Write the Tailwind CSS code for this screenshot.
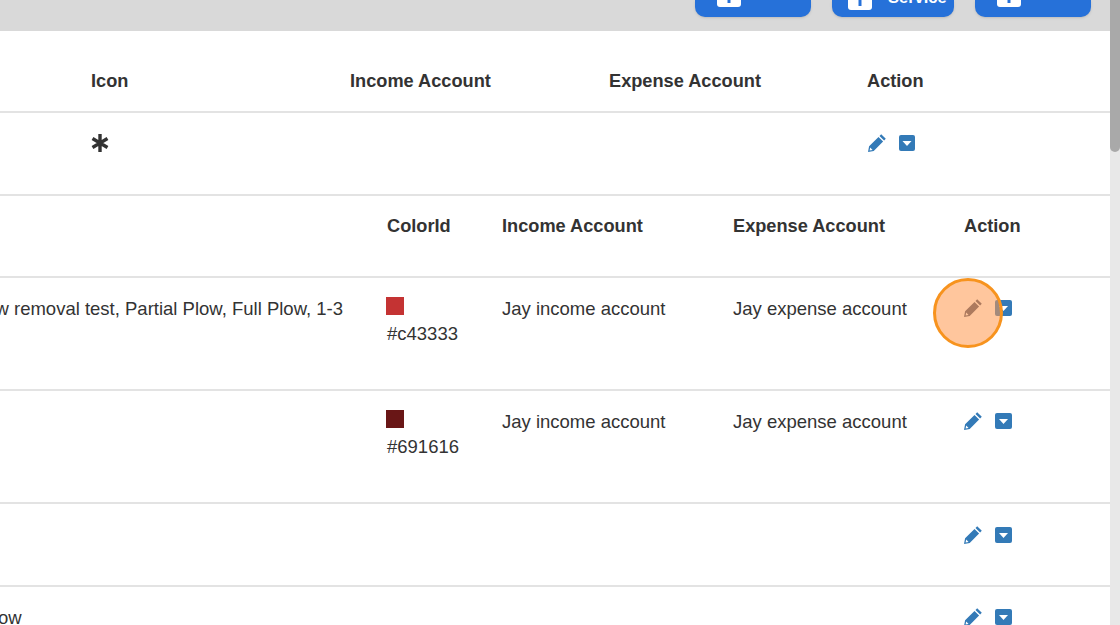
<!DOCTYPE html>
<html lang="en">
<head>
    <meta charset="UTF-8">
    <title>Items</title>
    <script src="https://cdn.jsdelivr.net/npm/@tailwindcss/browser@4"></script>
</head>
<body class="h-[625px] overflow-hidden bg-white font-['Liberation_Sans',Arial,sans-serif] text-[18.5px] leading-[24px] text-[#333]">
<div class="flex h-[625px]">
    <div class="w-[1110px] shrink-0">
        <!-- Top toolbar -->
        <div class="flex h-[31px] items-start justify-end gap-[21px] overflow-hidden bg-[#d9d9d9] pr-[19px]">
            <button class="relative flex h-[17px] w-[116px] items-start overflow-hidden rounded-b-[10px] bg-[#2671d9] pl-[22px] shadow-sm">
                <svg class="w-6 h-[7px]" viewBox="0 0 24 7"><path d="M0 0h24v4a3 3 0 0 1-3 3H3a3 3 0 0 1-3-3z" fill="#fff"/><path d="M10.500 0h3v3h-3z" fill="#2671d9"/></svg>
                <span class="absolute left-[62px] top-[-18px] text-[16.5px] font-bold text-white/70">Item</span>
            </button>
            <button class="relative flex h-[17px] w-[122px] items-start overflow-hidden rounded-b-[10px] bg-[#2671d9] pl-[16px] shadow-sm">
                <svg class="w-6 h-[10px]" viewBox="0 0 24 10"><path d="M0 0h24v7a3 3 0 0 1-3 3H3a3 3 0 0 1-3-3z" fill="#fff"/><path d="M10.500 0h3v6h-3z" fill="#2671d9"/></svg>
                <span class="absolute left-[56px] top-[-15px] text-[16.5px] font-bold text-white">Service</span>
            </button>
            <button class="relative flex h-[17px] w-[116px] items-start overflow-hidden rounded-b-[10px] bg-[#2671d9] pl-[22px] shadow-sm">
                <svg class="w-6 h-[7px]" viewBox="0 0 24 7"><path d="M0 0h24v4a3 3 0 0 1-3 3H3a3 3 0 0 1-3-3z" fill="#fff"/><path d="M10.500 0h3v3h-3z" fill="#2671d9"/></svg>
                <span class="absolute left-[62px] top-[-18px] text-[16.5px] font-bold text-white/70">Part</span>
            </button>
        </div>

        <!-- First table -->
        <div class="grid grid-cols-[91px_259px_259px_258px_1fr] font-bold text-[18.2px] h-[82px] pt-[38px] border-b-2 border-[#e3e3e3]">
            <div></div>
            <div>Icon</div>
            <div>Income Account</div>
            <div>Expense Account</div>
            <div>Action</div>
        </div>
        <div class="grid grid-cols-[91px_259px_259px_258px_1fr] h-[83px] pt-[20px] border-b-2 border-[#e3e3e3]">
            <div></div>
            <div>
                <svg class="w-[18px] h-[20px]" viewBox="0 0 18 20"><path d="M9 1v18M1.500 5.500l15 9M1.500 14.500l15-9" stroke="#333" stroke-width="3.400" fill="none"/></svg>
            </div>
            <div></div>
            <div></div>
            <div class="flex items-start gap-[12px]">
                <svg class="w-5 h-5" viewBox="0 0 20 20"><path d="M14.200 1.200 18.800 5.800l-1.700 1.700-4.600-4.600zM11.500 3.900l4.600 4.600-9.400 9.400-5.700 1.100 1.100-5.700zM3.200 14.600l-.6 3 3-.6z" fill="#337ab7" fill-rule="evenodd"/></svg>
                <svg class="w-4 h-4 mt-[2px]" viewBox="0 0 16 16"><rect width="16" height="16" rx="2" fill="#337ab7"/><path d="M3.500 6h9L8 11z" fill="#fff"/></svg>
            </div>
        </div>

        <!-- Second table -->
        <div class="grid grid-cols-[387px_115px_231px_231px_1fr] font-bold text-[18.2px] h-[82px] pt-[18px] border-b-2 border-[#e3e3e3]">
            <div></div>
            <div>ColorId</div>
            <div>Income Account</div>
            <div>Expense Account</div>
            <div>Action</div>
        </div>
        <div class="grid grid-cols-[387px_115px_231px_231px_1fr] h-[113px] pt-[19px] border-b-2 border-[#e3e3e3]">
            <div class="flex justify-end overflow-hidden whitespace-nowrap pr-[44px]">Snow removal test, Partial Plow, Full Plow, 1-3</div>
            <div>
                <div class="ml-[-1px] h-[18px] w-[18px] bg-[#c43333]"></div>
                <div class="mt-[7px]">#c43333</div>
            </div>
            <div>Jay income account</div>
            <div>Jay expense account</div>
            <div class="relative flex items-start gap-[12px] ml-[-1px] pt-[1px]">
                <svg class="relative z-10 w-5 h-5" viewBox="0 0 20 20"><path d="M14.200 1.200 18.800 5.800l-1.700 1.700-4.600-4.600zM11.500 3.900l4.600 4.600-9.400 9.400-5.700 1.100 1.100-5.700zM3.200 14.600l-.6 3 3-.6z" fill="#ad7a5e" fill-rule="evenodd"/></svg>
                <svg class="w-[17px] h-4 mt-[2px]" viewBox="0 0 17 16"><rect width="17" height="16" rx="2" fill="#337ab7"/><path d="M4 6h9l-4.500 5z" fill="#fff"/></svg>
                <div class="absolute left-[-30px] top-[-19px] h-[70px] w-[70px] rounded-full border-[3px] border-[#f7931e] bg-[#ff984d]/55"></div>
            </div>
        </div>
        <div class="grid grid-cols-[387px_115px_231px_231px_1fr] h-[113px] pt-[19px] border-b-2 border-[#e3e3e3]">
            <div></div>
            <div>
                <div class="ml-[-1px] h-[18px] w-[18px] bg-[#691616]"></div>
                <div class="mt-[7px]">#691616</div>
            </div>
            <div>Jay income account</div>
            <div>Jay expense account</div>
            <div class="flex items-start gap-[12px] ml-[-1px] pt-[1px]">
                <svg class="w-5 h-5" viewBox="0 0 20 20"><path d="M14.200 1.200 18.800 5.800l-1.700 1.700-4.600-4.600zM11.500 3.900l4.600 4.600-9.400 9.400-5.700 1.100 1.100-5.700zM3.200 14.600l-.6 3 3-.6z" fill="#337ab7" fill-rule="evenodd"/></svg>
                <svg class="w-[17px] h-4 mt-[2px]" viewBox="0 0 17 16"><rect width="17" height="16" rx="2" fill="#337ab7"/><path d="M4 6h9l-4.500 5z" fill="#fff"/></svg>
            </div>
        </div>
        <div class="grid grid-cols-[387px_115px_231px_231px_1fr] h-[83px] pt-[20px] border-b-2 border-[#e3e3e3]">
            <div></div><div></div><div></div><div></div>
            <div class="flex items-start gap-[12px] ml-[-1px] pt-[1px]">
                <svg class="w-5 h-5" viewBox="0 0 20 20"><path d="M14.200 1.200 18.800 5.800l-1.700 1.700-4.600-4.600zM11.500 3.900l4.600 4.600-9.400 9.400-5.700 1.100 1.100-5.700zM3.200 14.600l-.6 3 3-.6z" fill="#337ab7" fill-rule="evenodd"/></svg>
                <svg class="w-[17px] h-4 mt-[2px]" viewBox="0 0 17 16"><rect width="17" height="16" rx="2" fill="#337ab7"/><path d="M4 6h9l-4.500 5z" fill="#fff"/></svg>
            </div>
        </div>
        <div class="grid grid-cols-[387px_115px_231px_231px_1fr] pt-[19px]">
            <div class="ml-[-2px] whitespace-nowrap">ow</div><div></div><div></div><div></div>
            <div class="flex items-start gap-[12px] ml-[-1px] pt-[1px]">
                <svg class="w-5 h-5" viewBox="0 0 20 20"><path d="M14.200 1.200 18.800 5.800l-1.700 1.700-4.600-4.600zM11.500 3.900l4.600 4.600-9.400 9.400-5.700 1.100 1.100-5.700zM3.200 14.600l-.6 3 3-.6z" fill="#337ab7" fill-rule="evenodd"/></svg>
                <svg class="w-[17px] h-4 mt-[2px]" viewBox="0 0 17 16"><rect width="17" height="16" rx="2" fill="#337ab7"/><path d="M4 6h9l-4.500 5z" fill="#fff"/></svg>
            </div>
        </div>
    </div>
    <!-- Scrollbar -->
    <div class="flex-1 bg-[#e8e8e8]">
        <div class="h-[152px] rounded-b-[5px] bg-[#a9a9a9]"></div>
    </div>
</div>
</body>
</html>
